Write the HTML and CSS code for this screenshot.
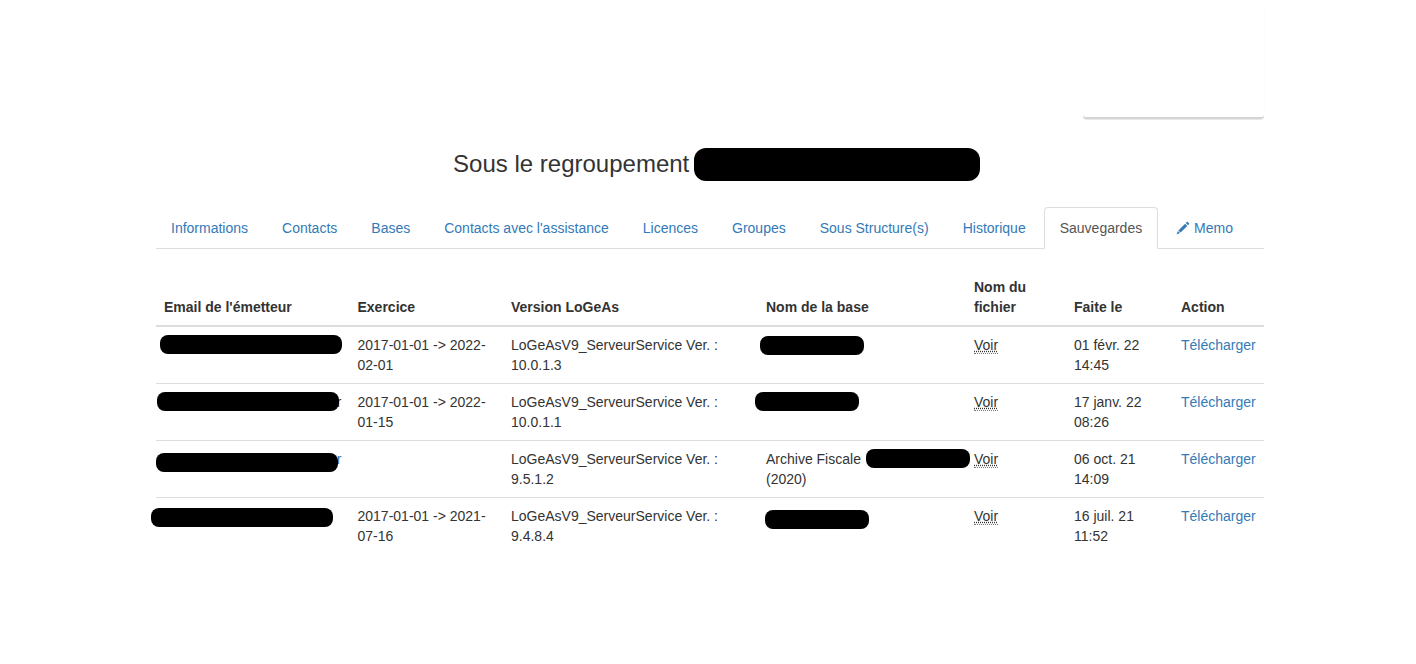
FILE: index.html
```html
<!DOCTYPE html>
<html lang="fr">
<head>
<meta charset="utf-8">
<title>Sauvegardes</title>
<link rel="stylesheet" href="styles.css">
</head>
<body>
<div class="page">
  <div class="search-box"></div>
  <h3 class="title">Sous le regroupement <span class="title-mask"></span></h3>
  <ul class="tabs">
    <li><a href="#">Informations</a></li>
    <li><a href="#">Contacts</a></li>
    <li><a href="#">Bases</a></li>
    <li><a href="#">Contacts avec l'assistance</a></li>
    <li><a href="#">Licences</a></li>
    <li><a href="#">Groupes</a></li>
    <li><a href="#">Sous Structure(s)</a></li>
    <li><a href="#">Historique</a></li>
    <li class="active"><a href="#">Sauvegardes</a></li>
    <li><a href="#"><svg class="pencil" viewBox="0 0 14 14" aria-hidden="true"><path d="M11.2 0.6 L13.4 2.8 L12 4.2 L9.8 2 Z M9.1 2.7 L11.3 4.9 L4.6 11.6 L2.4 9.4 Z M1.9 10 L4 12.1 L0.6 13.4 Z"/></svg> Memo</a></li>
  </ul>
  <table class="grid">
    <colgroup>
      <col class="c-email"><col class="c-ex"><col class="c-ver"><col class="c-base"><col class="c-file"><col class="c-date"><col class="c-act">
    </colgroup>
    <thead>
      <tr><th>Email de l'émetteur</th><th>Exercice</th><th>Version LoGeAs</th><th>Nom de la base</th><th>Nom du fichier</th><th>Faite le</th><th>Action</th></tr>
    </thead>
    <tbody>
      <tr>
        <td><span class="mask m-email1"></span></td>
        <td>2017-01-01 -&gt; 2022-02-01</td>
        <td>LoGeAsV9_ServeurService Ver. : 10.0.1.3</td>
        <td><span class="mask m-base1"></span></td>
        <td><abbr class="see" title="Fichier">Voir</abbr></td>
        <td>01 févr. 22 14:45</td>
        <td><a href="#">Télécharger</a></td>
      </tr>
      <tr>
        <td class="peek-cell"><span class="peek dark">r</span><span class="mask m-email2"></span></td>
        <td>2017-01-01 -&gt; 2022-01-15</td>
        <td>LoGeAsV9_ServeurService Ver. : 10.0.1.1</td>
        <td><span class="mask m-base2"></span></td>
        <td><abbr class="see" title="Fichier">Voir</abbr></td>
        <td>17 janv. 22 08:26</td>
        <td><a href="#">Télécharger</a></td>
      </tr>
      <tr>
        <td class="peek-cell"><a href="#" class="peek">r</a><span class="mask m-email3"></span></td>
        <td></td>
        <td>LoGeAsV9_ServeurService Ver. : 9.5.1.2</td>
        <td>Archive Fiscale<br>(2020)<span class="mask m-base3"></span></td>
        <td><abbr class="see" title="Fichier">Voir</abbr></td>
        <td>06 oct. 21 14:09</td>
        <td><a href="#">Télécharger</a></td>
      </tr>
      <tr>
        <td><span class="mask m-email4"></span></td>
        <td>2017-01-01 -&gt; 2021-07-16</td>
        <td>LoGeAsV9_ServeurService Ver. : 9.4.8.4</td>
        <td><span class="mask m-base4"></span></td>
        <td><abbr class="see" title="Fichier">Voir</abbr></td>
        <td>16 juil. 21 11:52</td>
        <td><a href="#">Télécharger</a></td>
      </tr>
    </tbody>
  </table>
</div>
</body>
</html>
```

FILE: styles.css
```css
* { box-sizing: border-box; }
html, body { margin: 0; padding: 0; background: #fff; }
body {
  font-family: "Liberation Sans", Arial, sans-serif;
  font-size: 14px;
  line-height: 20px;
  color: #333;
  height: 664px;
  overflow: hidden;
}
a { color: #337ab7; text-decoration: none; }
.page { margin-left: 156px; width: 1108px; }

.search-box {
  width: 181px;
  height: 119px;
  margin-left: auto;
  background: #fff;
  border-radius: 0 0 4px 4px;
  border-bottom: 2px solid #d4d4d4;
  box-shadow: 0 1px 1px rgba(0, 0, 0, .1);
}

.title {
  margin: 29px 0 26px;
  height: 33px;
  font-size: 24px;
  font-weight: 500;
  line-height: 31px;
  text-align: center;
  white-space: nowrap;
}
.title-mask {
  display: inline-block;
  width: 286px;
  height: 33px;
  margin-left: -2px;
  margin-right: -13px;
  border-radius: 12px;
  background: #000;
  vertical-align: top;
}

.tabs {
  display: flex;
  list-style: none;
  margin: 0 0 20px;
  padding: 0;
  height: 42px;
  border-bottom: 1px solid #ddd;
}
.tabs li { margin-right: 2px; height: 42px; }
.tabs li:first-child { margin-left: -1px; }
.tabs a {
  display: block;
  height: 42px;
  padding: 10px 15px;
  border: 1px solid transparent;
  border-radius: 4px 4px 0 0;
}
.tabs .active a {
  color: #555;
  background: #fff;
  border: 1px solid #ddd;
  border-bottom-color: #fff;
}
.pencil { width: 14px; height: 14px; fill: #337ab7; vertical-align: -2px; }

.grid { width: 1108px; table-layout: fixed; border-collapse: collapse; border-spacing: 0; }
.c-email { width: 193.5px; }
.c-ex { width: 153.5px; }
.c-ver { width: 255px; }
.c-base { width: 208px; }
.c-file { width: 100px; }
.c-date { width: 107px; }
.c-act { width: 91px; }
.grid th {
  padding: 8px;
  text-align: left;
  vertical-align: bottom;
  font-weight: 700;
  border-bottom: 2px solid #ddd;
}
.grid td {
  position: relative;
  padding: 8px;
  vertical-align: top;
  border-top: 1px solid #ddd;
}
.grid tbody tr:first-child td { border-top: 0; }
.see { border-bottom: 1px dotted #777; cursor: help; }

.peek-cell { text-align: right; }
.dark { color: #333; }
.mask {
  position: absolute;
  width: 182px;
  height: 19px;
  border-radius: 8px;
  background: #000;
}
.m-email1 { left: 4px; top: 8px; }
.m-email2 { left: 1px; top: 8px; }
.m-email3 { left: 0; top: 12px; }
.m-email4 { left: -5px; top: 10px; }
.m-base1, .m-base2, .m-base3, .m-base4 { width: 104px; }
.m-base1 { left: 2px; top: 9px; }
.m-base2 { left: -3px; top: 8px; }
.m-base3 { left: 108px; top: 8px; }
.m-base4 { left: 7px; top: 12px; }
```
